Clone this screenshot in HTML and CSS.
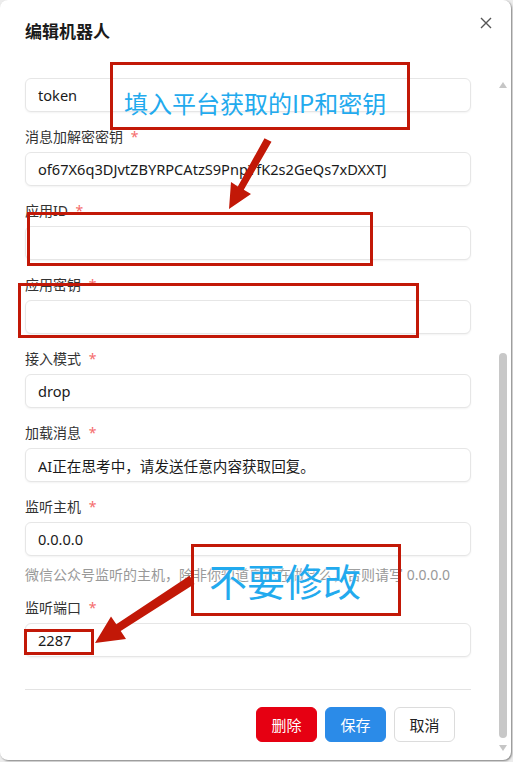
FILE: index.html
```html
<!DOCTYPE html>
<html>
<head>
  <title>编辑机器人</title>
  <link rel="stylesheet" href="styles.css">
</head>
<body>
  <div class="dialog">
    <div class="dialog-header">
      <h2>编辑机器人</h2>
      <svg class="close" width="12" height="12" viewBox="0 0 12 12">
        <path d="M1 1 L11 11 M11 1 L1 11" stroke="#555" stroke-width="1.4" fill="none"/>
      </svg>
    </div>

    <div class="dialog-body">
      <div class="field">
        <input class="input" type="text" value="token">
      </div>
      <div class="field">
        <label>消息加解密密钥 <span class="req">*</span></label>
        <input class="input" type="text" value="of67X6q3DJvtZBYRPCAtzS9PnpYfK2s2GeQs7xDXXTJ">
      </div>
      <div class="field">
        <label>应用ID <span class="req">*</span></label>
        <input class="input" type="text" value="">
      </div>
      <div class="field">
        <label>应用密钥 <span class="req">*</span></label>
        <input class="input" type="text" value="">
      </div>
      <div class="field">
        <label>接入模式 <span class="req">*</span></label>
        <input class="input" type="text" value="drop">
      </div>
      <div class="field">
        <label>加载消息 <span class="req">*</span></label>
        <input class="input" type="text" value="AI正在思考中，请发送任意内容获取回复。">
      </div>
      <div class="field">
        <label>监听主机 <span class="req">*</span></label>
        <input class="input" type="text" value="0.0.0.0">
        <div class="help">微信公众号监听的主机，除非你知道自己在做什么，否则请写 0.0.0.0</div>
      </div>
      <div class="field">
        <label>监听端口 <span class="req">*</span></label>
        <input class="input" type="text" value="2287">
      </div>

      <div class="dialog-footer">
        <button class="btn btn-danger">删除</button>
        <button class="btn btn-primary">保存</button>
        <button class="btn">取消</button>
      </div>
    </div>

    <!-- fake scrollbar -->
    <div class="scrollbar">
      <span class="arrow-up"></span>
      <span class="thumb"></span>
      <span class="arrow-down"></span>
    </div>

    <!-- annotations drawn over the screenshot -->
    <div class="mark mark-tip">填入平台获取的IP和密钥</div>
    <div class="mark mark-id"></div>
    <div class="mark mark-secret"></div>
    <div class="mark mark-warn">不要修改</div>
    <div class="mark mark-port"></div>
    <svg class="arrows" width="511" height="760" viewBox="0 0 511 760">
      <polygon fill="#c21807" points="271.5,141.7 243.8,189.8 251,194 229,209 231,182 237.8,186.4 264.5,138.3"/>
      <polygon fill="#c21807" points="194.5,584 120.7,631.1 126,639 95,643 111,616.5 116.3,624.3 189.5,575.8"/>
    </svg>
  </div>
</body>
</html>
```

FILE: styles.css
```css
/* dialog screenshot */
html, body {
  margin: 0;
  padding: 0;
}

body {
  background-color: #ececec;
  font-family: "Noto Sans", "Noto Sans CJK SC", sans-serif;
  width: 513px;
  height: 762px;
  overflow: hidden;
}

.dialog {
  position: relative;
  width: 511px;
  height: 760px;
  background-color: #fff;
  border-radius: 8px;
  box-shadow: 1px 1px 2px rgba(0, 0, 0, 0.45);
  overflow: hidden;
}

.dialog-header {
  display: flex;
  justify-content: space-between;
  align-items: flex-start;
  height: 62px;
  padding: 0 19px 0 25px;
}

.dialog-header h2 {
  margin: 20px 0 0;
  font-size: 17px;
  line-height: 24px;
  font-weight: bold;
  color: #1a1a1a;
}

.close {
  margin-top: 17px;
}

.dialog-body {
  padding: 16px 40px 0 25px;
}

.field {
  margin-bottom: 15px;
}

.field label {
  display: block;
  font-size: 14px;
  line-height: 20px;
  margin-bottom: 5px;
  color: #333;
}

.req {
  color: #f56c6c;
  margin-left: 4px;
}

.input {
  display: block;
  box-sizing: border-box;
  width: 100%;
  height: 34px;
  padding: 0 12px;
  font-family: "Noto Sans", "Noto Sans CJK SC", sans-serif;
  font-size: 14.6px;
  color: #1a1a1a;
  border: 1px solid #e6e6e6;
  border-radius: 6px;
  box-shadow: 0 1px 2px rgba(0, 0, 0, 0.05);
  outline: none;
}

.help {
  margin-top: 9px;
  margin-bottom: -2px;
  font-size: 14px;
  line-height: 20px;
  color: #999;
}

.dialog-footer {
  display: flex;
  justify-content: flex-end;
  gap: 8px;
  margin-top: 32px;
  padding: 17px 16px 0 0;
  border-top: 1px solid #e3e3e3;
}

.btn {
  width: 61px;
  height: 35px;
  font-family: "Noto Sans CJK SC", sans-serif;
  font-size: 15px;
  color: #222;
  background-color: #fff;
  border: 1px solid #dcdcdc;
  border-radius: 6px;
}

.btn-danger {
  color: #fff;
  background-color: #e60012;
  border-color: #e60012;
}

.btn-primary {
  color: #fff;
  background-color: #2b8be8;
  border-color: #2b8be8;
}

.scrollbar {
  position: absolute;
  left: 498px;
  top: 80px;
  width: 10px;
  height: 674px;
}

.arrow-up,
.arrow-down {
  position: absolute;
  left: 1px;
  width: 0;
  height: 0;
  border-left: 4px solid transparent;
  border-right: 4px solid transparent;
}

.arrow-up {
  top: 2px;
  border-bottom: 6px solid #c6c6c6;
}

.arrow-down {
  top: 665px;
  border-top: 6px solid #c6c6c6;
}

.thumb {
  position: absolute;
  left: 1px;
  top: 273px;
  width: 8px;
  height: 385px;
  background-color: #c8c8c8;
  border-radius: 4px;
}

.mark {
  position: absolute;
  box-sizing: border-box;
  border: 3px solid #c21807;
  color: #22aaee;
  font-family: "Noto Sans CJK SC", sans-serif;
  white-space: nowrap;
}

.mark-tip {
  left: 110px;
  top: 62px;
  width: 300px;
  height: 68px;
  padding: 20px 0 0 11px;
  font-size: 24px;
  line-height: 36px;
}

.mark-id {
  left: 27px;
  top: 212px;
  width: 346px;
  height: 54px;
}

.mark-secret {
  left: 18px;
  top: 283px;
  width: 401px;
  height: 55px;
}

.mark-warn {
  left: 191px;
  top: 544px;
  width: 210px;
  height: 72px;
  padding: 8px 0 0 15px;
  font-size: 38px;
  line-height: 50px;
  text-shadow: 0 0 2px #fff, 0 0 2px #fff;
}

.mark-port {
  left: 24px;
  top: 629px;
  width: 70px;
  height: 26px;
}

.arrows {
  position: absolute;
  left: 0;
  top: 0;
  pointer-events: none;
}
```
